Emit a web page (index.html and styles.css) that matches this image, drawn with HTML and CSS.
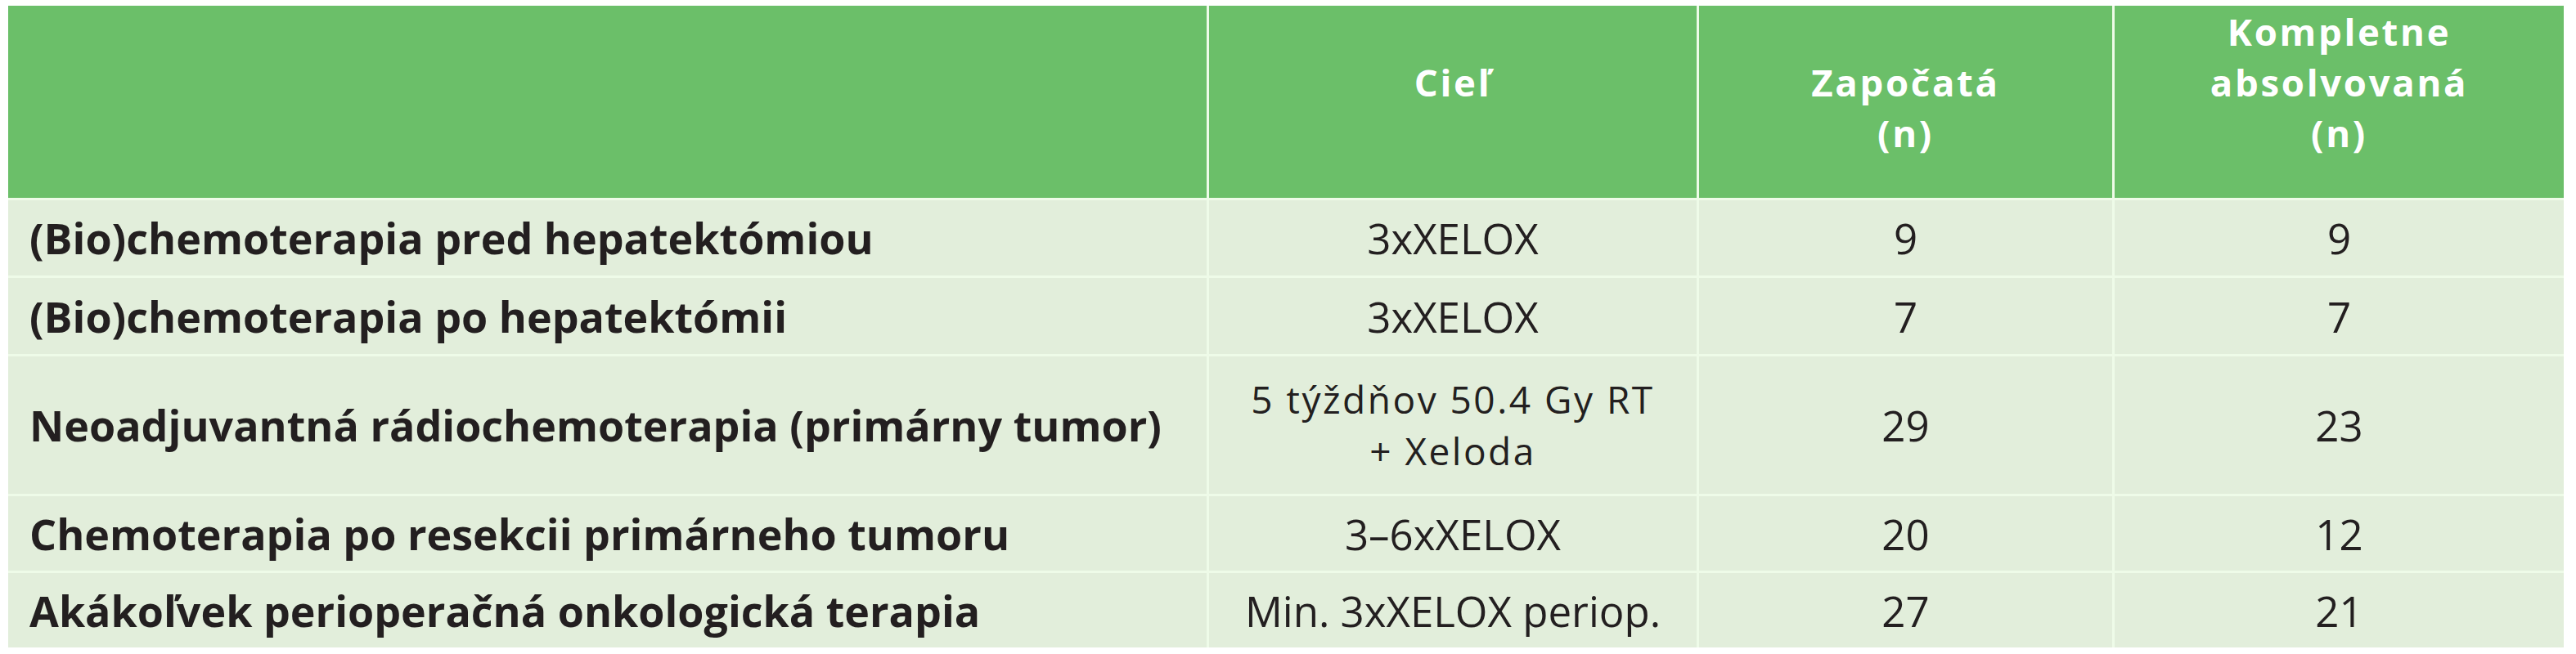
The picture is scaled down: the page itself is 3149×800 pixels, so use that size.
FILE: index.html
```html
<!DOCTYPE html>
<html lang="sk">
<head>
<meta charset="utf-8">
<title>Tabuľka</title>
<link rel="stylesheet" href="styles.css">
</head>
<body>
<div class="wrap">
<table class="data">
  <colgroup>
    <col class="c1"><col class="c2"><col class="c3"><col class="c4">
  </colgroup>
  <thead>
    <tr class="head">
      <th class="label"></th>
      <th class="single">Cieľ</th>
      <th>Započatá<br>(n)</th>
      <th>Kompletne<br>absolvovaná<br>(n)</th>
    </tr>
  </thead>
  <tbody>
    <tr class="r1">
      <td class="label">(Bio)chemoterapia pred hepatektómiou</td>
      <td>3xXELOX</td>
      <td>9</td>
      <td>9</td>
    </tr>
    <tr class="r2">
      <td class="label">(Bio)chemoterapia po hepatektómii</td>
      <td>3xXELOX</td>
      <td>7</td>
      <td>7</td>
    </tr>
    <tr class="r3">
      <td class="label">Neoadjuvantná rádiochemoterapia (primárny tumor)</td>
      <td class="multi">5 týždňov 50.4 Gy RT<br>+ Xeloda</td>
      <td>29</td>
      <td>23</td>
    </tr>
    <tr class="r4">
      <td class="label">Chemoterapia po resekcii primárneho tumoru</td>
      <td>3–6xXELOX</td>
      <td>20</td>
      <td>12</td>
    </tr>
    <tr class="r5">
      <td class="label">Akákoľvek perioperačná onkologická terapia</td>
      <td>Min. 3xXELOX periop.</td>
      <td>27</td>
      <td>21</td>
    </tr>
  </tbody>
</table>
</div>
</body>
</html>
```
FILE: styles.css
```css
html, body {
  margin: 0;
  padding: 0;
  background: #ffffff;
}

.wrap {
  padding: 7px 15px 8px 10px;
}

.data {
  width: 3124px;
  table-layout: fixed;
  border-collapse: separate;
  border-spacing: 0;
  font-family: "Open Sans", "Noto Sans", "DejaVu Sans", sans-serif;
  font-size: 51px;
  line-height: 70px;
  color: #231f20;
}

.c1 { width: 1465px; }
.c2 { width: 599px; }
.c3 { width: 508px; }
.c4 { width: 552px; }

.data th,
.data td {
  box-sizing: border-box;
  padding: 0 10px;
  text-align: center;
  vertical-align: middle;
  border-left: 3px solid #eefbe8;
  border-top: 3px solid #eefbe8;
}

.data th:first-child,
.data td:first-child {
  border-left: none;
}

.data thead th {
  border-top: none;
  background: #6bbf69;
  color: #ffffff;
  font-weight: 700;
  height: 235px;
  vertical-align: bottom;
  padding-bottom: 49px;
  font-size: 45.5px;
  letter-spacing: 2.7px;
  line-height: 62px;
}

.data thead th.single {
  padding-bottom: 111px;
}

.data tbody td {
  background: #e2eedb;
  font-weight: 400;
}

.data tbody td.multi {
  font-size: 46px;
  letter-spacing: 2.5px;
  line-height: 63px;
}

.data tbody td.label {
  text-align: left;
  font-weight: 700;
  font-size: 52px;
  padding-left: 26px;
}

.data tbody tr.r1 td { height: 95px; }
.data tbody tr.r2 td { height: 96px; }
.data tbody tr.r3 td { height: 171px; }
.data tbody tr.r4 td { height: 94px; }
.data tbody tr.r5 td { height: 94px; }
```
